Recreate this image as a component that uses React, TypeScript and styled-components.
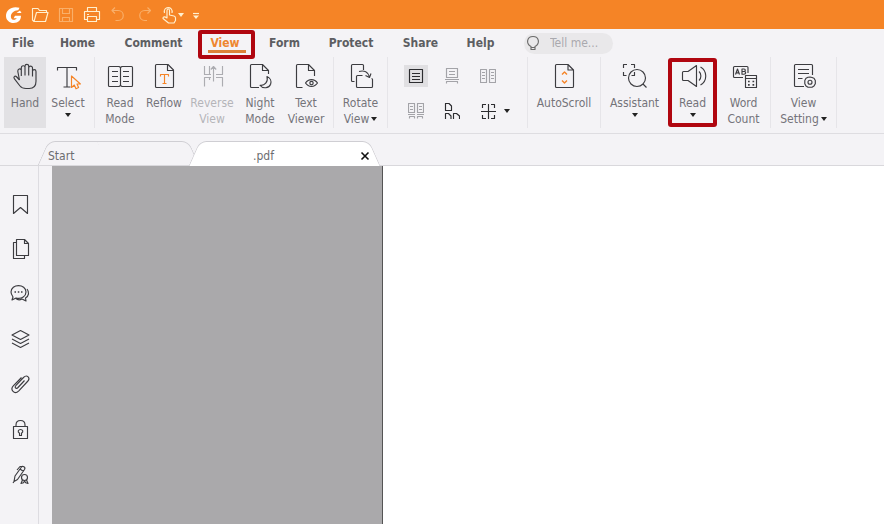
import React from "react";
import styled, { createGlobalStyle, css } from "styled-components";

const ORANGE = "#f58426";
const RED = "#b00610";
const INK = "#3c3c40";

const GlobalStyle = createGlobalStyle`
  * { box-sizing: border-box; }
  body {
    margin: 0;
    background: #fff;
    color: #6c6c70;
    font: 12px/16px "DejaVu Sans Condensed", "Noto Sans", sans-serif;
  }
  button, input { font: inherit; color: inherit; }
  button { border: 0; padding: 0; background: none; cursor: pointer; }
`;

const Page = styled.div`
  min-height: 100vh;
  display: flex;
  flex-direction: column;
  background: #f4f3f6;
`;

const TitleBar = styled.header`
  display: flex;
  align-items: center;
  height: 29px;
  padding: 0 4px;
  gap: 6px;
  background: ${ORANGE};
  color: #fff0cf;
`;

const QuickButton = styled.button<{ $wide?: boolean }>`
  display: flex;
  align-items: center;
  width: ${(p) => (p.$wide ? 24 : 20)}px;
  height: 20px;
  &:disabled { opacity: 0.4; cursor: default; }
`;

const MenuBar = styled.nav`
  display: flex;
  align-items: stretch;
  height: 28px;
  padding-left: 3px;
`;

const MenuItem = styled.button<{ $width: number; $active?: boolean }>`
  position: relative;
  width: ${(p) => p.$width}px;
  font-weight: bold;
  color: ${(p) => (p.$active ? "#ee8630" : "#5d5e62")};
  ${(p) =>
    p.$active &&
    css`
      &::before {
        content: "";
        position: absolute;
        inset: 21px 9px auto 13px;
        height: 3px;
        background: #dc8239;
      }
      &::after {
        content: "";
        position: absolute;
        inset: 1px 0 -2px 3px;
        border: 4px solid ${RED};
        border-radius: 3px;
      }
    `}
`;

const Search = styled.label`
  display: flex;
  align-items: center;
  align-self: center;
  width: 89px;
  height: 21px;
  margin-left: 16px;
  padding-left: 1px;
  gap: 9px;
  border-radius: 11px;
  background: #e9e8ea;
`;

const SearchInput = styled.input`
  flex: 1;
  min-width: 0;
  padding: 0;
  border: 0;
  outline: 0;
  background: transparent;
  &::placeholder { color: #a9a9ae; opacity: 1; }
`;

const Ribbon = styled.div`
  display: flex;
  height: 77px;
  padding: 0 0 5px 4px;
  border-bottom: 1px solid #dedde1;
`;

const Group = styled.div<{ $pad?: number }>`
  display: flex;
  padding: 0 ${(p) => p.$pad ?? 0}px;
  border-right: 1px solid #e6e5e9;
  &:first-child { padding-left: 0; }
`;

const ToolButton = styled.button<{ $width: number; $active?: boolean; $marked?: boolean }>`
  position: relative;
  display: flex;
  flex-direction: column;
  align-items: center;
  width: ${(p) => p.$width}px;
  padding-top: 5px;
  color: #74747a;
  background: ${(p) => (p.$active ? "#e2e1e4" : "transparent")};
  &:disabled { color: #b5b5b9; cursor: default; }
  ${(p) =>
    p.$marked &&
    css`
      &::after {
        content: "";
        position: absolute;
        inset: 1px 0;
        border: 4px solid ${RED};
        border-radius: 3px;
      }
    `}
`;

const ToolLabel = styled.span`
  margin-top: 5px;
  text-align: center;
  white-space: nowrap;
`;

const LabelLine = styled.span`
  display: flex;
  align-items: center;
  justify-content: center;
  gap: 2px;
  height: 16px;
`;

const Caret = styled.span<{ $light?: boolean; $below?: boolean }>`
  width: 0;
  height: 0;
  margin-top: ${(p) => (p.$below ? 2 : 0)}px;
  border: 3px solid transparent;
  border-top: 4px solid ${(p) => (p.$light ? "#fff0cf" : "#222")};
  border-bottom: 0;
`;

const LayoutGrid = styled.div`
  display: grid;
  grid-template-columns: 24px 24px 24px 14px;
  grid-template-rows: 22px 22px;
  gap: 13px 12px;
  width: 139px;
  padding: 8px 0 0 16px;
`;

const LayoutButton = styled.button<{ $active?: boolean; $muted?: boolean }>`
  display: flex;
  align-items: center;
  justify-content: center;
  background: ${(p) => (p.$active ? "#e0dfe2" : "transparent")};
  color: ${(p) => (p.$muted ? "#a3a3a8" : "#2c2c30")};
`;

const MoreButton = styled.button`
  display: flex;
  align-items: center;
  grid-column: 4;
  grid-row: 2;
  margin-left: -8px;
`;

const TabStrip = styled.div`
  display: flex;
  height: 32px;
  padding: 7px 0 0 43px;
  border-bottom: 1px solid #d9d8dc;
`;

const Tab = styled.div<{ $active?: boolean; $width: number }>`
  position: relative;
  z-index: ${(p) => (p.$active ? 2 : 1)};
  display: flex;
  align-items: center;
  width: ${(p) => p.$width}px;
  padding-left: ${(p) => (p.$active ? 59 : 5)}px;
  isolation: isolate;
  &::before, &::after {
    content: "";
    position: absolute;
    z-index: -1;
    top: 0;
    bottom: ${(p) => (p.$active ? -1 : 0)}px;
    width: 60%;
    border-top: 1px solid #cfced3;
    background: ${(p) => (p.$active ? "#fff" : "#f4f3f6")};
  }
  &::before {
    left: 0;
    border-left: 1px solid #cfced3;
    border-top-left-radius: 7px;
    transform: skewX(-24deg);
  }
  &::after {
    right: 0;
    border-right: 1px solid #cfced3;
    border-top-right-radius: 7px;
    transform: skewX(24deg);
  }
`;

const TabTitle = styled.button`
  flex: 1;
  margin-top: 5px;
  text-align: left;
`;

const CloseButton = styled.button`
  display: flex;
  margin: 6px 5px 0 0;
  color: #111;
`;

const Workspace = styled.main`
  flex: 1;
  display: flex;
`;

const SideBar = styled.aside`
  display: flex;
  flex-direction: column;
  align-items: center;
  width: 39px;
  padding: 26px 0 20px 2px;
  gap: 21px;
  border-right: 1px solid #dddce1;
`;

const SideButton = styled.button`
  display: flex;
  height: 24px;
`;

const Canvas = styled.section`
  flex: 1;
  display: flex;
  padding-left: 13px;
`;

const Backdrop = styled.div`
  width: 331px;
  background: #aaa9ab;
  border-right: 1px solid #555;
`;

const Sheet = styled.div`
  flex: 1;
  background: #fff;
`;

const Glyph = styled.svg`
  display: block;
  flex: none;
  fill: none;
  stroke: currentColor;
  stroke-width: 1.15;
  stroke-linejoin: round;
`;

function Icon({ size = 28, color, children }: { size?: number; color?: string; children: React.ReactNode }) {
  return (
    <Glyph width={size} height={size} viewBox={`0 0 ${size} ${size}`} color={color} aria-hidden>
      {children}
    </Glyph>
  );
}

const ribbonIcons = {
  hand: (
    <path d="M8.500 18 5.800 15C4 13 2 14.800 3.500 16.800L9 24C10.500 25.900 12.800 26.500 15 26.500H18.200C22.800 26.500 25 23.800 25 19.300V9.500C25 7 21.500 7 21.500 9.500V14.500M21.500 10V6C21.500 3.500 17.700 3.500 17.700 6V13.500M17.700 6V4.300C17.700 1.800 14 1.800 14 4.300V13.500M14 5C13.500 3 10.300 3.500 10.300 5.800V14M10.300 8C9.300 6 6.500 7 6.800 9.500L8.500 18" />
  ),
  select: (
    <>
      <path d="M3.5 8.500V5.500H22.500V8.500M13 5.500V25M9.500 25H16.500" />
      <path stroke={ORANGE} d="M17.500 14V25.500L20.300 23 22 26.800 24.600 25.600 23 22H26.400Z" />
    </>
  ),
  readMode: (
    <path d="M3.500 4.500H13L14.500 5.500 16 4.500H25.500Q26.500 4.500 26.500 5.500V23.500Q26.500 24.500 25.500 24.500H16L14.500 23.500 13 24.500H3.500Q2.500 24.500 2.500 23.500V5.500Q2.500 4.500 3.500 4.500ZM14.500 5.500V23.500M6 9.500H12M6 14.500H12M6 19.500H12M17 9.500H23M17 14.500H23M17 19.500H23" />
  ),
  reflow: (
    <>
      <path d="M18 2.500H6.500Q5.500 2.500 5.500 3.500V24.500Q5.500 25.500 6.500 25.500H22.500Q23.500 25.500 23.500 24.500V8ZM17.500 2.500V8.500H23.500" />
      <path stroke={ORANGE} d="M10.500 14.500V12.500H18.500V14.500M14.500 12.500V21.500M12.500 21.500H16.500" />
    </>
  ),
  reverse: (
    <path d="M6.500 4V12.500H13M11.500 4V12.500M6.500 24.500V15.500H13M11.500 15.500V18M15.500 19.500V4.500M12.800 7.500 15.500 4.500 18.200 7.500M24.500 4V12.500H18M24.500 24.500V15.500H18" />
  ),
  night: (
    <>
      <path d="M13 25.500H5.500Q4.500 25.500 4.500 24.500V3.500Q4.500 2.500 5.500 2.500H16.500L22.500 8.500V12M16.500 2.500V8.500H22.500" />
      <path d="M21 14.500C22.500 20 18.500 24 14 23.300 16.500 27 23 26.500 24.600 22.300 25.700 19 24.300 15.800 21 14.500Z" />
    </>
  ),
  viewer: (
    <>
      <path d="M10.500 25.500H5.500Q4.500 25.500 4.500 24.500V3.500Q4.500 2.500 5.500 2.500H16.500L22.500 8.500V14M16.500 2.500V8.500H22.500" />
      <path d="M13.500 21C16.500 16.500 22.500 16.500 25.500 21 22.500 25.500 16.500 25.500 13.500 21Z" />
      <circle cx="19.500" cy="21" r="1.700" />
    </>
  ),
  rotate: (
    <>
      <path d="M7.500 19.500H5.500Q4.500 19.500 4.500 18.500V3.500Q4.500 2.500 5.500 2.500H15.500Q16.500 2.500 16.500 3.500V8" />
      <path d="M15.500 13.500H10.500Q9.500 13.500 9.500 14.500V24.500Q9.500 25.500 10.500 25.500H24.500Q25.500 25.500 25.500 24.500V17.500Q25.500 16.500 24.500 16.500M12 9.500C17 8 21.500 10 22.500 15M18.500 13.500 22.500 15.500 24 11.500" />
    </>
  ),
  autoscroll: (
    <>
      <path d="M18 2.500H6.500Q5.500 2.500 5.500 3.500V24.500Q5.500 25.500 6.500 25.500H22.500Q23.500 25.500 23.500 24.500V8ZM18 2.500V8H23.500" />
      <path stroke={ORANGE} strokeWidth="1.400" d="M12 12.500 14.500 10 17 12.500M12 18.500 14.500 21 17 18.500" />
    </>
  ),
  assistant: (
    <>
      <path d="M2.500 6V2.500H6M10 2.500H13.500V6M2.500 10V13.500H5.500M10.500 13.500H13.500V10" />
      <circle cx="16" cy="16" r="8.500" />
      <path d="M22 22 25.500 25.500" />
    </>
  ),
  speaker: (
    <path d="M4.500 9.500H9L17.500 3.500V24.500L9 18.500H4.500Q3.500 18.500 3.500 17.500V10.500Q3.500 9.500 4.500 9.500ZM20 9.500C22.500 11.500 22.500 16.500 20 18.500M21.500 5C28.500 9 28.500 19 21.500 23" />
  ),
  wordCount: (
    <>
      <path d="M13 15.500H4.500Q3.500 15.500 3.500 14.500V5.500Q3.500 4.500 4.500 4.500H17Q18 4.500 18 5.500V11" />
      <path d="M5.500 12.500 7.500 7 9.500 12.500M6 10.800H9M12 7V12.200H14Q15.700 12.200 15.700 10.800 15.700 9.500 14 9.500H12H14Q15.300 9.500 15.300 8.200 15.300 7 14 7Z" />
      <path d="M15.500 13.500H26.500V25.500H15.500ZM15.500 16.500H26.500" />
      <path strokeWidth="1.700" d="M18 19.500H19.700M22.500 19.500H24.200M18 22.800H19.700M22.500 22.800H24.200" />
    </>
  ),
  setting: (
    <>
      <path d="M14 24.500H5.500Q4.500 24.500 4.500 23.500V3.500Q4.500 2.500 5.500 2.500H21.500Q22.500 2.500 22.500 3.500V13M8 7.500H19M8 11.500H19M8 16.500H12.500" />
      <path d="M20 15 22 15.500 24 16.200 25.300 18.500 25.300 21.700 24 24 22 25.200H18L16 24 14.800 21.700V18.500L16 16.200 18 15.200Z" />
      <circle cx="20" cy="20.200" r="2" />
    </>
  ),
};

type IconName = keyof typeof ribbonIcons;

interface ToolProps {
  icon: IconName;
  lines: string[];
  width: number;
  caret?: "below" | "inline";
  active?: boolean;
  disabled?: boolean;
  marked?: boolean;
}

function Tool({ icon, lines, width, caret, active, disabled, marked }: ToolProps) {
  return (
    <ToolButton $width={width} $active={active} $marked={marked} disabled={disabled}>
      <Icon color={disabled ? "#acacb1" : INK}>{ribbonIcons[icon]}</Icon>
      <ToolLabel>
        {lines.map((line, i) => (
          <LabelLine key={line}>
            {line}
            {caret === "inline" && i === lines.length - 1 && <Caret />}
          </LabelLine>
        ))}
      </ToolLabel>
      {caret === "below" && <Caret $below />}
    </ToolButton>
  );
}

const menus = [
  { name: "File", width: 40 },
  { name: "Home", width: 69 },
  { name: "Comment", width: 83 },
  { name: "View", width: 60, active: true },
  { name: "Form", width: 59 },
  { name: "Protect", width: 74 },
  { name: "Share", width: 65 },
  { name: "Help", width: 55 },
];

const layouts = [
  { name: "Single page", active: true, d: "M1.5 1.5H14.5V14.5H1.5ZM4 5.5H12M4 8.5H12M4 11.5H12" },
  { name: "Continuous", muted: true, d: "M2.5 .5H13.5V9.5H2.5ZM5 3.5H11M5 6.5H11M1 11.5H15M2.5 15.5V13.5H13.5V15.5" },
  { name: "Facing", muted: true, d: "M.5 1.5H6.5V14.5H.5ZM9.5 1.5H15.5V14.5H9.5ZM2 4.5H5M2 7.5H5M2 10.5H5M11 4.5H14M11 7.5H14M11 10.5H14" },
  { name: "Continuous facing", muted: true, d: "M.5 .5H6.5V9.5H.5ZM9.5 .5H15.5V9.5H9.5ZM2 3.5H5M2 6.5H5M11 3.5H14M11 6.5H14M0 11.5H7M9 11.5H16M1.5 15.5V13.5H6.5V15.5M9.5 15.5V13.5H14.5V15.5" },
  { name: "Separate cover", d: "M1.5 7.5V.5H5L7.5 3V7.5ZM1.5 16V10.5H4.5L7 13V16M9.5 16V10.5H12.5L15.5 13V16" },
  { name: "Split", d: "M2.5 5V1.5H6M11 1.5H14.5V5M2.5 12V15.5H6M11 15.5H14.5V12M8.5 1V16M1 8.5H16" },
];

const panels = [
  { name: "Bookmarks", icon: <path d="M5.500 3.500H19.500V21.500L12.500 15.500 5.500 21.500Z" /> },
  { name: "Pages", icon: <path d="M8.500 2.500H16.500L20.500 6.500V18.500H8.500ZM16.500 2.500V6.500H20.500M8.500 5.500H5.500V21.500H16.500V18.500" /> },
  {
    name: "Comments",
    icon: (
      <>
        <path d="M5 15 4 18 8 16C14 17.500 18 14 18 10 18 1.500 3 1.500 3 10 3 12 4 13.500 5 15ZM19 7C21.500 10 21 14 17.500 16L18 19 14 17C12 18 9.500 18 8 16.500" />
        <path strokeWidth="1.500" d="M6.500 10H8M9.800 10H11.300M13 10H14.500" />
      </>
    ),
  },
  { name: "Layers", icon: <path d="M12.500 3.500 21 8 12.500 12.500 4 8ZM4 12 12.500 16.500 21 12M4 16 12.500 20.500 21 16" /> },
  {
    name: "Attachments",
    icon: <path d="M16.500 8.500 10 15.500C8 17.500 6 15.500 8 13.300L15.500 5.500C19 2 23 6 19.500 9.500L10.800 18.800C6.500 23 1.500 18 5.500 13.700L13.500 5.500" />,
  },
  {
    name: "Security",
    icon: (
      <>
        <path d="M5.500 9.500H19.500V21.500H5.500ZM8 9.500V8C8 2 17 2 17 8V9.500" />
        <path d="M11.500 16.200C9 14.500 10.500 12.500 12.500 12.500S16 14.500 13.500 16.200V18.500H11.500Z" />
      </>
    ),
  },
  {
    name: "Signatures",
    icon: (
      <>
        <path d="M6 19.500 7 14 13.500 5C14.500 3.500 18 5 16.500 7.500L9.500 17.500ZM12 7 15.500 9.500M6 19.500 5 21M9 8 12 4.500H14" />
        <circle cx="16.500" cy="15.500" r="3" />
        <path d="M14.500 18 13 21.500 15.500 20.800 16.500 19 17.800 20.800 20 21.500 18.500 18" />
      </>
    ),
  },
];

export default function App() {
  return (
    <Page>
      <GlobalStyle />
      <TitleBar>
        <QuickButton aria-label="Application menu">
          <Icon size={20}>
            <path fill="#fff" stroke="none" d="M15.500 2.800C8 .6 2 4.800 2 11c0 4.300 3.500 7 7.500 7 5 0 7.500-3 7.500-7.200H11l-1.400 2.500h3.200c-1 2-5.600 2.400-5.900-1.400C6.700 8 10.200 5 14.300 5.200ZM16 5.500 12.500 8h5Z" />
          </Icon>
        </QuickButton>
        <QuickButton aria-label="Open">
          <Icon size={20}>
            <path d="M4 16.500 2.500 15V3.500H8L9.500 5.500H16.500V7.500M4 16.500 6.500 7.500H18L15.500 16.500Z" />
          </Icon>
        </QuickButton>
        <QuickButton aria-label="Save" disabled>
          <Icon size={20}>
            <path d="M3.500 3.500H16.500V16.500H3.500ZM6.500 3.500V8.500H13.500V3.500M6.500 16.500V12.500H13.500V16.500" />
          </Icon>
        </QuickButton>
        <QuickButton aria-label="Print">
          <Icon size={20}>
            <path d="M5.500 6.500V2.500H14.500V6.500M5.500 14.500H2.500V6.500H17.500V14.500H14.500M5.500 11.500H14.500V16.500H5.500ZM5 9.500H7" />
          </Icon>
        </QuickButton>
        <QuickButton aria-label="Undo" disabled>
          <Icon size={20}>
            <path d="M7 2.500 4 5.500 7 8.500M4 5.500H10C17 5.500 17 15.500 10 15.500H7.500" />
          </Icon>
        </QuickButton>
        <QuickButton aria-label="Redo" disabled>
          <Icon size={20}>
            <path d="M13.500 2.500 16.500 5.500 13.500 8.500M16.500 5.500H11C4 5.500 4 15.500 11 15.500H13" />
          </Icon>
        </QuickButton>
        <QuickButton aria-label="Touch mode" $wide>
          <Icon size={18}>
            <path d="M7 12V4.500C7 2.500 9.500 2.500 9.500 4.500V9L14 10C15 10.300 15.500 11 15.500 12V14.500L14 17H8.500L3 12.500C2.800 10.500 4.800 10.300 7 12ZM4.500 7C2.500 0 13.500-.5 12 7" />
          </Icon>
          <Caret $light />
        </QuickButton>
        <QuickButton aria-label="Customize toolbar">
          <Icon size={12}>
            <path d="M3 4.500H9" />
            <path fill="currentColor" stroke="none" d="M3 6.500H9L6 10Z" />
          </Icon>
        </QuickButton>
      </TitleBar>

      <MenuBar>
        {menus.map((m) => (
          <MenuItem key={m.name} $width={m.width} $active={m.active}>
            {m.name}
          </MenuItem>
        ))}
        <Search>
          <Icon size={16} color="#6b6b6b">
            <path d="M6 11.500C.5 8.500 2 1.500 8 1.500S15.500 8.500 10 11.500V14.500H6ZM6 12.500H10" />
          </Icon>
          <SearchInput aria-label="Tell me" placeholder="Tell me..." />
        </Search>
      </MenuBar>

      <Ribbon>
        <Group $pad={4}>
          <Tool icon="hand" lines={["Hand"]} width={42} active />
          <Tool icon="select" lines={["Select"]} width={44} caret="below" />
        </Group>
        <Group $pad={1}>
          <Tool icon="readMode" lines={["Read", "Mode"]} width={48} />
          <Tool icon="reflow" lines={["Reflow"]} width={40} />
          <Tool icon="reverse" lines={["Reverse", "View"]} width={56} disabled />
          <Tool icon="night" lines={["Night", "Mode"]} width={40} />
          <Tool icon="viewer" lines={["Text", "Viewer"]} width={52} />
        </Group>
        <Group>
          <Tool icon="rotate" lines={["Rotate", "View"]} width={53} caret="inline" />
        </Group>
        <Group>
          <LayoutGrid>
            {layouts.map((l, i) => (
              <React.Fragment key={l.name}>
                <LayoutButton aria-label={l.name} $active={l.active} $muted={l.muted}>
                  <Icon size={16}>
                    <path d={l.d} />
                  </Icon>
                </LayoutButton>
                {i === 2 && <span />}
              </React.Fragment>
            ))}
            <MoreButton aria-label="More layouts">
              <Caret />
            </MoreButton>
          </LayoutGrid>
        </Group>
        <Group>
          <Tool icon="autoscroll" lines={["AutoScroll"]} width={72} />
        </Group>
        <Group>
          <Tool icon="assistant" lines={["Assistant"]} width={67} caret="below" />
          <Tool icon="speaker" lines={["Read"]} width={49} caret="below" marked />
          <Tool icon="wordCount" lines={["Word", "Count"]} width={53} />
        </Group>
        <Group>
          <Tool icon="setting" lines={["View", "Setting"]} width={65} caret="inline" />
        </Group>
      </Ribbon>

      <TabStrip>
        <Tab $width={151}>
          <TabTitle>Start</TabTitle>
        </Tab>
        <Tab $width={181} $active>
          <TabTitle>.pdf</TabTitle>
          <CloseButton aria-label="Close tab">
            <Icon size={10}>
              <path strokeWidth="1.600" d="M1.500 1.500 8.500 8.500M8.500 1.500 1.500 8.500" />
            </Icon>
          </CloseButton>
        </Tab>
      </TabStrip>

      <Workspace>
        <SideBar>
          {panels.map((p) => (
            <SideButton key={p.name} aria-label={p.name}>
              <Icon size={24} color={INK}>
                {p.icon}
              </Icon>
            </SideButton>
          ))}
        </SideBar>
        <Canvas>
          <Backdrop />
          <Sheet />
        </Canvas>
      </Workspace>
    </Page>
  );
}
